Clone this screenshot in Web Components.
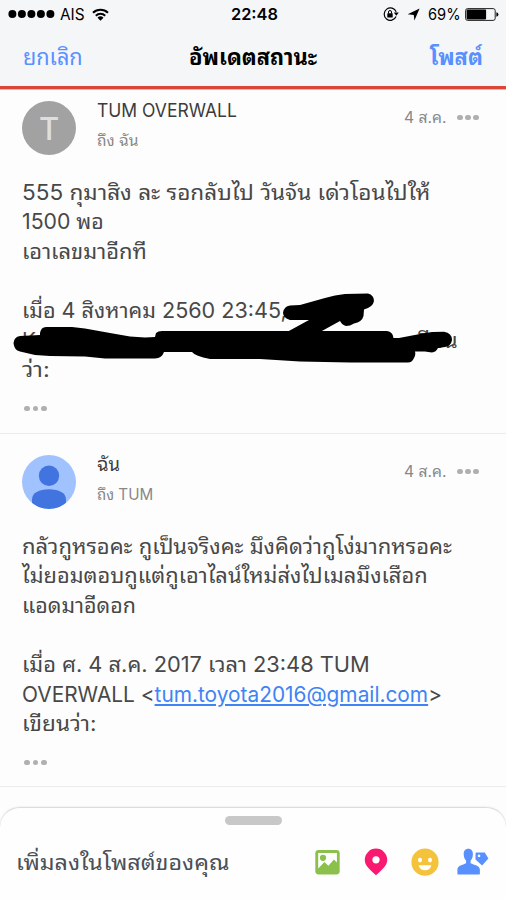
<!DOCTYPE html>
<html lang="th">
<head>
<meta charset="utf-8">
<title>อัพเดตสถานะ</title>
<style>
    html, body {margin: 0; height: 100%; overflow: hidden;}
    body {font-family: Inter, "Noto Sans Thai Looped", "Noto Looped Thai", Loma, Garuda, Umpush, Waree, "Noto Sans Thai", sans-serif; background: #fdfdfd;}
</style>
</head>
<body>
<composer-page>
    <status-bar slot="top"></status-bar>
    <nav-bar slot="top">
        <fit-text slot="left" w="60">ยกเลิก</fit-text>
        <fit-text w="128">อัพเดตสถานะ</fit-text>
        <fit-text slot="right" w="53">โพสต์</fit-text>
    </nav-bar>

    <mail-message>
        <letter-avatar slot="avatar">T</letter-avatar>
        <fit-text slot="name" w="140">TUM OVERWALL</fit-text>
        <fit-text slot="to" w="41">ถึง ฉัน</fit-text>
        <fit-text slot="date" w="42">4 ส.ค.</fit-text>
        <fit-text w="409">555 กุมาสิง ละ รอกลับไป วันจัน เด่วโอนไปให้</fit-text>
        <fit-text w="82">1500 พอ</fit-text>
        <fit-text w="125">เอาเลขมาอีกที</fit-text>
        <br>
        <fit-text w="265">เมื่อ 4 สิงหาคม 2560 23:45,</fit-text>
        <marked-line><fit-text w="14">K</fit-text><fit-text w="48">เขียน</fit-text></marked-line>
        <fit-text w="28">ว่า:</fit-text>
    </mail-message>

    <mail-message>
        <person-avatar slot="avatar"></person-avatar>
        <fit-text slot="name" w="23">ฉัน</fit-text>
        <fit-text slot="to" w="56">ถึง TUM</fit-text>
        <fit-text slot="date" w="42">4 ส.ค.</fit-text>
        <fit-text w="430">กลัวกูหรอคะ กูเป็นจริงคะ มึงคิดว่ากูโง่มากหรอคะ</fit-text>
        <fit-text w="406">ไม่ยอมตอบกูแต่กูเอาไลน์ใหม่ส่งไปเมลมึงเสือก</fit-text>
        <fit-text w="114">แอดมาอีดอก</fit-text>
        <br>
        <fit-text w="348">เมื่อ ศ. 4 ส.ค. 2017 เวลา 23:48 TUM</fit-text>
        <fit-text w="420">OVERWALL &lt;<a>tum.toyota2016@gmail.com</a>&gt;</fit-text>
        <fit-text w="74">เขียนว่า:</fit-text>
    </mail-message>

    <mail-message>
        <person-avatar slot="avatar"></person-avatar>
        <fit-text slot="name" w="23">ฉัน</fit-text>
    </mail-message>

    <add-sheet slot="bottom"><fit-text w="214">เพิ่มลงในโพสต์ของคุณ</fit-text></add-sheet>
</composer-page>

<script>
// one line of text, stretched to the width given in "w"
class FitText extends HTMLElement {
    constructor() {
        super();
        this.attachShadow({mode: 'open'}).innerHTML = `
            <style>
                :host {display: block; white-space: nowrap;}
                span {display: inline-block; transform-origin: 0 50%;}
                ::slotted(a) {color: #4083f5; text-decoration: underline; text-decoration-thickness: 1.5px; text-underline-offset: 2px;}
            </style>
            <span><slot></slot></span>
        `;
    }

    connectedCallback() {
        this.style.width = this.getAttribute('w') + 'px';
        requestAnimationFrame(() => this.fit());
    }

    fit() {
        const span = this.shadowRoot.querySelector('span');
        span.style.transform = `scaleX(${this.getAttribute('w') / span.offsetWidth})`;
    }
}

class ComposerPage extends HTMLElement {
    constructor() {
        super();
        this.attachShadow({mode: 'open'}).innerHTML = `
            <style>
                :host {display: flex; flex-direction: column; width: 506px; height: 900px; overflow: hidden;}
                header {flex: none; height: 86px; background: #f5f6f8; border-bottom: 3px solid #dc4638; box-shadow: 0 1px 0 #d3bdbb;}
                main {flex: 1; min-height: 0; padding-top: 1px; overflow: hidden; margin-bottom: -20px;}
            </style>
            <header><slot name="top"></slot></header>
            <main><slot></slot></main>
            <slot name="bottom"></slot>
        `;
    }
}

class StatusBar extends HTMLElement {
    constructor() {
        super();
        this.attachShadow({mode: 'open'}).innerHTML = `
            <style>
                :host {display: grid; grid-template-columns: 1fr auto 1fr; align-items: center; height: 28px; padding: 0 7px 0 8px; font-size: 16px; line-height: 28px; color: #000;}
                div {display: flex; align-items: center;}
                .right {justify-content: flex-end;}
                svg {display: block; flex: none;}
                .time {font-weight: 600; margin-left: 1px;}
            </style>
            <div>
                <svg width="47" height="10" viewBox="0 0 47 10"><circle cx="4.4" cy="5" r="4"/><circle cx="13.9" cy="5" r="4"/><circle cx="23.4" cy="5" r="4"/><circle cx="32.9" cy="5" r="4"/><circle cx="42.4" cy="5" r="4"/></svg>
                <fit-text w="25" style="margin-left: 5px">AIS</fit-text>
                <svg width="17" height="13" viewBox="0 0 17 13" style="margin-left: 7px" fill="none" stroke="#000" stroke-width="2"><path d="M1 4.800a10.800 10.800 0 0 1 15 0M3.800 7.700a6.800 6.800 0 0 1 9.400 0"/><path d="M5.500 9.700a4.400 4.400 0 0 1 6 0l-3 3z" fill="#000" stroke="none"/></svg>
            </div>
            <fit-text class="time" w="47">22:48</fit-text>
            <div class="right">
                <svg width="16" height="14" viewBox="0 0 16 14"><path d="M13.1 9.6A6.2 6.2 0 1 1 13.2 4.9" fill="none" stroke="#000" stroke-width="1.2"/><path d="M10.8 5.5h5l-2.5 3.3z"/><rect x="4.3" y="6.2" width="5.4" height="4.3" rx=".5"/><path d="M5.5 6.5V5a1.5 1.5 0 0 1 3 0v1.5" fill="none" stroke="#000"/></svg>
                <svg width="13" height="13" viewBox="0 0 13 13" style="margin-left: 8px"><path d="M12.6.4 7.4 12.4 6.8 6.9.7 6.2z"/></svg>
                <fit-text w="33" style="margin-left: 8px">69%</fit-text>
                <svg width="34" height="13" viewBox="0 0 34 13" style="margin-left: 4px"><rect x=".6" y=".6" width="29.6" height="11.8" rx="2" fill="none" stroke="#222" stroke-width="1"/><rect x="1.6" y="1.6" width="19.5" height="9.8" rx=".8"/><path d="M31.4 4.3q2 .4 2 2.2t-2 2.2z"/></svg>
            </div>
        `;
    }
}

class NavBar extends HTMLElement {
    constructor() {
        super();
        this.attachShadow({mode: 'open'}).innerHTML = `
            <style>
                :host {display: grid; grid-template-columns: 1fr auto 1fr; height: 58px; padding: 0 23px 0 23px; font-size: 22px; line-height: 58px; color: #5890ff;}
                .title {color: #000; font-weight: 700;}
                .right {justify-self: end; font-weight: 700;}
            </style>
            <div><slot name="left"></slot></div>
            <div class="title"><slot></slot></div>
            <div class="right"><slot name="right"></slot></div>
        `;
    }
}

class MoreDots extends HTMLElement {
    constructor() {
        super();
        this.attachShadow({mode: 'open'}).innerHTML = `
            <style>
                :host {display: flex; gap: 2.4px;}
                i {width: 5.8px; height: 5.8px; border-radius: 50%; background: #b0b0b0;}
            </style>
            <i></i><i></i><i></i>
        `;
    }
}

class LetterAvatar extends HTMLElement {
    constructor() {
        super();
        this.attachShadow({mode: 'open'}).innerHTML = `
            <style>
                :host {display: block; width: 54px; height: 54px; border-radius: 50%; background: #a2a2a2; color: #dedede; font: 500 31px/55px Inter, sans-serif; text-align: center;}
            </style>
            <slot></slot>
        `;
    }
}

class PersonAvatar extends HTMLElement {
    constructor() {
        super();
        this.attachShadow({mode: 'open'}).innerHTML = `
            <style>
                :host {display: block; width: 54px; height: 54px; border-radius: 50%; overflow: hidden; background: #a0c2ff;}
                svg {display: block;}
            </style>
            <svg width="54" height="54" viewBox="0 0 54 54" fill="#4274e0"><circle cx="27" cy="20.7" r="10.2"/><path d="M10 49v-4.5C10 38 17 34.3 27 34.3S44 38 44 44.5V49Q37 54 27 54T10 49z"/></svg>
        `;
    }
}

class MailMessage extends HTMLElement {
    constructor() {
        super();
        this.attachShadow({mode: 'open'}).innerHTML = `
            <style>
                :host {display: block; box-sizing: border-box; height: 353.5px; border-bottom: 1.5px solid #ececec; padding: 21.5px 26px 0 22px;}
                :host(:first-of-type) {height: 343.5px; padding-top: 11px;}
                header {display: flex; height: 54px;}
                .who {flex: 1; margin: -5px 0 0 21px; font-size: 18.5px; line-height: 28px; color: #3c3c3c;}
                .to {font-size: 16px; line-height: 32px; color: #888;}
                .date {display: flex; align-items: center; gap: 11px; height: 33px; font-size: 16px; line-height: 33px; color: #888; margin-right: 1px;}
                .text {margin-top: 22.5px; font-size: 21px; line-height: 29.66px; color: #484848;}
                more-dots.end {margin: 20.5px 0 0 2.4px;}
            </style>
            <header>
                <slot name="avatar"></slot>
                <div class="who">
                    <slot name="name"></slot>
                    <div class="to"><slot name="to"></slot></div>
                </div>
                <div class="date"><slot name="date"></slot><more-dots></more-dots></div>
            </header>
            <div class="text"><slot></slot></div>
            <more-dots class="end"></more-dots>
        `;
    }
}

// a line of text with a marker drawn over it
class MarkedLine extends HTMLElement {
    constructor() {
        super();
        this.attachShadow({mode: 'open'}).innerHTML = `
            <style>
                :host {display: flex; justify-content: space-between; position: relative; width: 436px;}
                svg {position: absolute; left: -9px; top: -36px;}
            </style>
            <slot></slot>
            <svg width="445" height="75" viewBox="13 290 445 75">
                <path d="M20 336 40 335 40 333Q41 327 46 327L72 327 85 328.5 110 333 130 336.5 145 337.5 155 337 156 333Q158 331 162 331L387 331Q393 332 393.5 338L399 338 420 334 432 332 444 331.8Q452 333 452 340 451 346 445 347L438 348Q436 352 432 352.5 428 352 425 351.5L415 351.5Q416 355 414 358 412 362.5 408 362.5L350 362.5 300 361.5 260 359 210 359Q195 356 192 352L164 352Q162 358 155 358.5L105 358.5 85 356.5 50 356 35 355 20 351.5Q14 350 13.5 343 14 337 20 336z"/>
                <path d="M290 305.5 300 305 325 298Q335 295 345 294L368 293.5Q374 295 374 301 373 307 364 309.5L363.5 316Q362 322 354 323.500 350 326 346 326 342 325 340 321L321 331.500 287 332 309 320 290 320Q283 318 283 312.500 284 306.500 290 305.500z"/>
            </svg>
        `;
    }
}

class AddSheet extends HTMLElement {
    constructor() {
        super();
        this.attachShadow({mode: 'open'}).innerHTML = `
            <style>
                :host {display: block; flex: none; box-sizing: border-box; position: relative; height: 93px; border-top: 1px solid #dcdcdc; border-radius: 20px 20px 0 0; background: #fefefe; box-shadow: 0 0 2px #ddd;}
                .handle {width: 57px; height: 8.5px; margin: 8px 0 0 224.5px; border-radius: 4.5px; background: #c8c8c8;}
                .row {display: flex; justify-content: space-between; align-items: center; height: 50px; margin: 12px 17px 0 16px; font-size: 21px; line-height: 50px; color: #4b4f56;}
                .icons {display: flex; align-items: center; margin-top: 1px;}
                svg {display: block;}
                ::slotted(fit-text) {margin-top: 3px;}
            </style>
            <div class="handle"></div>
            <div class="row">
                <slot></slot>
                <div class="icons">
                    <svg width="25" height="28" viewBox="0 0 25 28"><rect x=".3" y="2" width="24.4" height="24.4" rx="3.4" fill="#8bc04d"/><path d="M3.2 4.9h18.7v9.6l-3-3-5.5 6.3-4-3.9-6.2 6.6z" fill="#fff"/><circle cx="8" cy="9.8" r="3.1" fill="#8bc04d"/></svg>
                    <svg width="24" height="28" viewBox="0 0 24 28" style="margin-left: 24.5px"><path d="M12 .6A11.2 11.2 0 0 0 .8 11.8C.8 17 4 20.3 12 27.2 20 20.3 23.2 17 23.2 11.8A11.2 11.2 0 0 0 12 .6z" fill="#fa1971"/><circle cx="12" cy="11.8" r="3.6" fill="#fff"/></svg>
                    <svg width="28" height="28" viewBox="0 0 28 28" style="margin-left: 22.5px"><circle cx="14" cy="14.2" r="13.6" fill="#f5c33b"/><g fill="#fff"><ellipse cx="9" cy="12.1" rx="2" ry="2.3"/><ellipse cx="19" cy="12.1" rx="2" ry="2.3"/><path d="M7.6 17.3h12.8Q19.3 22.3 14 22.3T7.6 17.3z"/></g></svg>
                    <svg width="32" height="28" viewBox="0 0 32 28" style="margin-left: 18.5px" fill="#5890ff"><path d="M11.3.7c3 0 4.6 2.2 4.6 5.2 0 3.4-1 5.2-2.3 6.6v2.8c3.6 1.7 9.3 2.2 9.3 6.5v3.6q0 1.2-1.3 1.2H1.7Q.4 26.6.4 25.4v-3.6c0-4.3 5.3-4.8 8.7-6.500v-2.800C7.700 11.100 6.700 9.300 6.700 5.900c0-3 1.600-5.200 4.600-5.200z"/><path fill-rule="evenodd" d="M19.600 4.600h8.200l3.600 6-6.300 6.900-6.600-6V5.700q0-1.100 1.100-1.100zM22 6.600a1.300 1.300 0 1 0 .1 0z"/></svg>
                </div>
            </div>
        `;
    }
}

customElements.define('fit-text', FitText);
customElements.define('more-dots', MoreDots);
customElements.define('letter-avatar', LetterAvatar);
customElements.define('person-avatar', PersonAvatar);
customElements.define('marked-line', MarkedLine);
customElements.define('mail-message', MailMessage);
customElements.define('status-bar', StatusBar);
customElements.define('nav-bar', NavBar);
customElements.define('add-sheet', AddSheet);
customElements.define('composer-page', ComposerPage);
</script>
</body>
</html>
